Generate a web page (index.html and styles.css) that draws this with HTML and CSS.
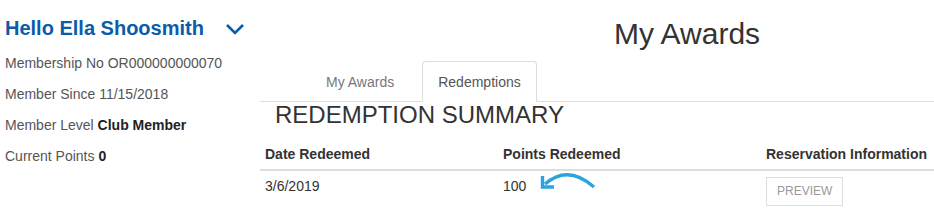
FILE: index.html
```html
<!DOCTYPE html>
<html>
<head>
<meta charset="utf-8">
<link rel="stylesheet" href="styles.css">
</head>
<body>
<div class="page">
  <aside class="sidebar">
    <div class="greeting">
      <h2 class="hello">Hello Ella Shoosmith</h2>
      <svg class="chevron" width="20" height="12" viewBox="0 0 20 12"><polyline points="2,2 10,10 18,2" fill="none" stroke="#0a5cab" stroke-width="2.6"/></svg>
    </div>
    <p class="info">Membership No OR000000000070</p>
    <p class="info">Member Since 11/15/2018</p>
    <p class="info">Member Level <b>Club Member</b></p>
    <p class="info">Current Points <b>0</b></p>
  </aside>
  <main class="main">
    <h1 class="title">My Awards</h1>
    <ul class="tabs">
      <li class="tab">My Awards</li>
      <li class="tab active">Redemptions</li>
    </ul>
    <h3 class="summary">REDEMPTION SUMMARY</h3>
    <table class="grid">
      <thead>
        <tr>
          <th class="c1">Date Redeemed</th>
          <th class="c2">Points Redeemed</th>
          <th class="c3">Reservation Information</th>
        </tr>
      </thead>
      <tbody>
        <tr>
          <td>3/6/2019</td>
          <td>100<svg class="arrow" width="60" height="22" viewBox="0 0 60 22"><path d="M57 17 Q31 -6 8 14" fill="none" stroke="#2ba4de" stroke-width="3.4"/><path d="M5.5 6 V17 H17" fill="none" stroke="#2ba4de" stroke-width="3.4"/></svg></td>
          <td><button class="preview">PREVIEW</button></td>
        </tr>
      </tbody>
    </table>
  </main>
</div>
</body>
</html>
```
FILE: styles.css
```css
html, body {
  margin: 0;
  padding: 0;
  background: #fff;
}
body {
  font-family: "Liberation Sans", Arial, sans-serif;
  font-size: 14px;
  color: #333;
}
.page {
  display: flex;
}
.sidebar {
  width: 255px;
  padding-left: 5px;
  flex: none;
}
.greeting {
  display: flex;
  align-items: center;
  width: 240px;
  justify-content: space-between;
  margin-top: 16px;
  margin-bottom: 13px;
}
.hello {
  margin: 0;
  font-size: 20px;
  line-height: 24px;
  font-weight: bold;
  color: #0a5cab;
}
.chevron {
  display: block;
  margin-top: 2px;
}
.info {
  margin: 0 0 11px 0;
  line-height: 20px;
  color: #555;
}
.info b {
  color: #222;
}
.main {
  flex: 1;
  min-width: 0;
}
.title {
  margin: 17px 0 11px 0;
  padding-left: 180px;
  text-align: center;
  font-size: 30px;
  line-height: 33px;
  font-weight: normal;
  color: #333;
}
.tabs {
  list-style: none;
  margin: 0;
  padding: 0 0 0 50px;
  display: flex;
  border-bottom: 1px solid #ddd;
}
.tab {
  padding: 10px 15px 9px 15px;
  line-height: 20px;
  border: 1px solid transparent;
  border-radius: 4px 4px 0 0;
  margin-bottom: -1px;
  margin-right: 12px;
  color: #777;
}
.tab.active {
  border-color: #ddd #ddd #fff #ddd;
  background: #fff;
  color: #555;
}
.summary {
  margin: 0;
  padding-left: 15px;
  font-size: 24px;
  line-height: 25px;
  font-weight: normal;
  color: #333;
}
.grid {
  margin-top: 9px;
  width: 674px;
  border-collapse: collapse;
}
.grid th {
  text-align: left;
  padding: 8px 5px 5px 5px;
  line-height: 20px;
  border-bottom: 2px solid #ddd;
  color: #333;
  font-weight: bold;
}
.grid .c1 { width: 228px; }
.grid .c2 { width: 253px; }
.grid td {
  padding: 5px 5px;
  line-height: 20px;
  vertical-align: top;
  color: #333;
}
.arrow {
  display: inline-block;
  vertical-align: top;
  margin-top: -6px;
  margin-left: 11px;
}
.preview {
  margin-top: 1px;
  font-family: "Liberation Sans", Arial, sans-serif;
  font-size: 12px;
  line-height: 17px;
  padding: 5px 10px;
  border: 1px solid #ddd;
  background: #fff;
  color: #999;
  border-radius: 0;
}
```
